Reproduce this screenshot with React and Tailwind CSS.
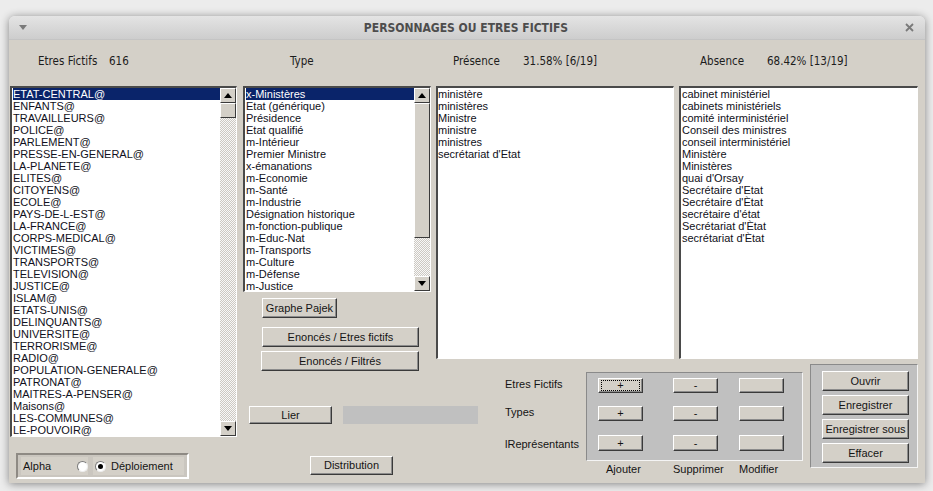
import React from "react";

// --- data ---
const etres = [
  "ETAT-CENTRAL@", "ENFANTS@", "TRAVAILLEURS@", "POLICE@", "PARLEMENT@",
  "PRESSE-EN-GENERAL@", "LA-PLANETE@", "ELITES@", "CITOYENS@", "ECOLE@",
  "PAYS-DE-L-EST@", "LA-FRANCE@", "CORPS-MEDICAL@", "VICTIMES@", "TRANSPORTS@",
  "TELEVISION@", "JUSTICE@", "ISLAM@", "ETATS-UNIS@", "DELINQUANTS@",
  "UNIVERSITE@", "TERRORISME@", "RADIO@", "POPULATION-GENERALE@", "PATRONAT@",
  "MAITRES-A-PENSER@", "Maisons@", "LES-COMMUNES@", "LE-POUVOIR@",
];

const types = [
  "x-Ministères", "Etat (générique)", "Présidence", "Etat qualifié", "m-Intérieur",
  "Premier Ministre", "x-émanations", "m-Economie", "m-Santé", "m-Industrie",
  "Désignation historique", "m-fonction-publique", "m-Educ-Nat", "m-Transports",
  "m-Culture", "m-Défense", "m-Justice",
];

const presence = ["ministère", "ministères", "Ministre", "ministre", "ministres", "secrétariat d'Etat"];

const absence = [
  "cabinet ministériel", "cabinets ministériels", "comité interministériel",
  "Conseil des ministres", "conseil interministériel", "Ministère", "Ministères",
  "quai d'Orsay", "Secrétaire d'Etat", "Secrétaire d'Ètat", "secrétaire d'état",
  "Secrétariat d'Ètat", "secrétariat d'Ètat",
];

// --- raised Tk style button ---
const Btn = ({ children, className = "" }) => (
  <div
    className={`flex items-center justify-center bg-[#d4d0c8] border-t border-l border-t-white border-l-white border-b border-r border-b-[#3a3a3a] border-r-[#3a3a3a] shadow-[inset_-1px_-1px_0_#8c8c8c] text-[11px] leading-none text-[#141414] ${className}`}
  >
    {children}
  </div>
);

const Arrow = ({ up }) => (
  <div className="h-[15px] w-[16px] shrink-0 flex items-center justify-center bg-[#d4d0c8] border-t border-l border-t-white border-l-white border-b border-r border-b-[#3a3a3a] border-r-[#3a3a3a]">
    <svg width="8" height="5" viewBox="0 0 8 5">
      {up ? <path d="M4 0 L8 5 L0 5 Z" fill="#000" /> : <path d="M0 0 L8 0 L4 5 Z" fill="#000" />}
    </svg>
  </div>
);

const ScrollBar = ({ thumb }) => (
  <div className="w-[16px] h-full flex flex-col shrink-0">
    <Arrow up />
    <div className={`w-[16px] shrink-0 bg-[#d4d0c8] border-t border-l border-t-white border-l-white border-b border-r border-b-[#3a3a3a] border-r-[#3a3a3a] ${thumb}`} />
    <div className="flex-1 bg-[repeating-conic-gradient(#cdc9c2_0%_25%,#f8f8f8_0%_50%)] bg-[length:2px_2px]" />
    <Arrow />
  </div>
);

// --- sunken list box ---
const ListBox = ({ items, selected = -1, className = "", thumb, pad = "" }) => (
  <div
    className={`flex bg-white border-t-2 border-l-2 border-t-[#4a4a4a] border-l-[#4a4a4a] border-b border-r border-b-white border-r-white overflow-hidden ${className}`}
  >
    <div className={`flex-1 overflow-hidden ${pad}`}>
      {items.map((it, i) => (
        <div
          key={i}
          className={`h-[12px] text-[11px] leading-[12px] whitespace-nowrap ${
            i === selected ? "bg-[#0a246a] text-white" : "text-[#101020]"
          }`}
        >
          {it}
        </div>
      ))}
    </div>
    {thumb && <ScrollBar thumb={thumb} />}
  </div>
);

const Radio = ({ on }) => (
  <div className="w-[11px] h-[11px] rounded-full bg-white border border-t-[#7a7a7a] border-l-[#7a7a7a] border-b-[#eeeeee] border-r-[#eeeeee] flex items-center justify-center">
    {on && <div className="w-[5px] h-[5px] rounded-full bg-black" />}
  </div>
);

export default function App() {
  return (
    <div className="w-[933px] h-[491px] overflow-hidden bg-[#ececec] pt-[16px] pl-[9px] font-['Liberation_Sans',Arial,sans-serif]">
      <div className="w-[916px] h-[467px] flex flex-col rounded-t-[6px] overflow-hidden shadow-[0_1px_8px_rgba(0,0,0,0.45)]">
        {/* Title bar */}
        <div className="h-[24px] shrink-0 flex items-center bg-gradient-to-b from-[#e4e4e4] to-[#cdcdcd] border-b border-[#c4c4c4]">
          <svg className="ml-[10px]" width="8" height="5" viewBox="0 0 8 5">
            <path d="M0 0 L8 0 L4 5 Z" fill="#7a7a7a" />
          </svg>
          <div className="flex-1 text-center text-[12px] font-bold text-[#4d4d4d] font-['DejaVu_Sans_Condensed','Liberation_Sans',sans-serif]">
            PERSONNAGES OU ETRES FICTIFS
          </div>
          <svg className="mr-[11px]" width="9" height="9" viewBox="0 0 9 9">
            <path d="M1 1 L8 8 M8 1 L1 8" stroke="#7a7a7a" strokeWidth="1.8" />
          </svg>
        </div>

        {/* Body */}
        <div className="flex-1 bg-[#d4d0c8] flex flex-col">
          {/* Header labels */}
          <div className="h-[46px] shrink-0 flex pt-[14px] text-[11.5px] leading-[15px] text-[#1c1c1c] font-['DejaVu_Sans_Condensed','Liberation_Sans',sans-serif]">
            <span className="ml-[29px] w-[71px]">Etres Fictifs</span>
            <span className="w-[181px]">616</span>
            <span className="w-[163px]">Type</span>
            <span className="w-[70px]">Présence</span>
            <span className="w-[177px]">31.58% [6/19]</span>
            <span className="w-[67px]">Absence</span>
            <span>68.42% [13/19]</span>
          </div>

          <div className="flex items-start">
            {/* Column 1 */}
            <div className="ml-[1px] w-[227px] flex flex-col">
              <ListBox items={etres} selected={0} className="h-[351px]" thumb="h-[15px]" pad="pl-[1px]" />
              <div className="mt-[16px] ml-[6px] w-[173px] h-[26px] bg-[#cac6bf] border-2 border-t-[#8e8a84] border-l-[#8e8a84] border-b-white border-r-white flex items-center px-[3px] gap-[5px]">
                <div className="w-[67px] h-[18px] bg-[#d4d0c8] flex items-center pl-[2px] text-[11px] text-[#141414]">
                  <span className="flex-1">Alpha</span>
                  <Radio />
                </div>
                <div className="h-[18px] flex-1 bg-[#d4d0c8] flex items-center gap-[5px] pl-[2px] text-[11px] text-[#141414]">
                  <Radio on />
                  <span>Déploiement</span>
                </div>
              </div>
            </div>

            {/* Column 2 */}
            <div className="ml-[6px] w-[193px] flex flex-col">
              <ListBox items={types} selected={0} className="w-[188px] h-[206px]" thumb="h-[135px]" pad="pl-[1px]" />
              <Btn className="mt-[6px] ml-[19px] w-[75px] h-[20px]">Graphe Pajek</Btn>
              <Btn className="mt-[9px] ml-[19px] w-[157px] h-[20px]">Enoncés / Etres fictifs</Btn>
              <Btn className="mt-[4px] ml-[18px] w-[158px] h-[20px]">Enoncés / Filtrés</Btn>
              <div className="mt-[35px] flex w-max">
                <Btn className="ml-[6px] w-[83px] h-[18px]">Lier</Btn>
                <div className="ml-[11px] w-[135px] h-[18px] bg-[#c0c0c0]" />
              </div>
              <Btn className="mt-[32px] ml-[67px] w-[83px] h-[19px]">Distribution</Btn>
            </div>

            {/* Columns 3 & 4 */}
            <div className="w-[482px] flex flex-col">
              <div className="flex gap-[5px]">
                <ListBox items={presence} className="w-[238px] h-[273px]" />
                <ListBox items={absence} className="w-[239px] h-[273px]" pad="pl-[1px]" />
              </div>

              <div className="flex items-start">
                {/* row labels */}
                <div className="ml-[69px] w-[81px] mt-[13px] flex flex-col text-[11px] leading-[14px] text-[#141414]">
                  <span className="mt-[5px]">Etres Fictifs</span>
                  <span className="mt-[14px]">Types</span>
                  <span className="mt-[18px]">lReprésentants</span>
                </div>

                {/* action grid */}
                <div className="w-[217px] mt-[13px] flex flex-col">
                  <div className="h-[89px] bg-[#c0c0c0] border border-t-[#8a8a8a] border-l-[#8a8a8a] border-b-[#f4f4f4] border-r-[#f4f4f4] flex flex-col pl-[11px]">
                    <div className="mt-[5px] flex">
                      <Btn className="w-[45px] h-[15px]">
                        <span className="w-[39px] h-[11px] border border-dotted border-black flex items-center justify-center">+</span>
                      </Btn>
                      <Btn className="ml-[30px] w-[45px] h-[15px]">-</Btn>
                      <Btn className="ml-[21px] w-[45px] h-[15px]" />
                    </div>
                    <div className="mt-[13px] flex">
                      <Btn className="w-[45px] h-[15px]">+</Btn>
                      <Btn className="ml-[30px] w-[45px] h-[15px]">-</Btn>
                      <Btn className="ml-[21px] w-[45px] h-[15px]" />
                    </div>
                    <div className="mt-[14px] flex">
                      <Btn className="w-[45px] h-[16px]">+</Btn>
                      <Btn className="ml-[30px] w-[45px] h-[16px]">-</Btn>
                      <Btn className="ml-[21px] w-[45px] h-[16px]" />
                    </div>
                  </div>
                  <div className="mt-[1px] flex text-[11px] leading-[14px] text-[#141414]">
                    <span className="ml-[20px] w-[67px]">Ajouter</span>
                    <span className="w-[66px]">Supprimer</span>
                    <span>Modifier</span>
                  </div>
                </div>

                {/* file panel */}
                <div className="ml-[7px] mt-[5px] w-[108px] h-[104px] bg-[#c0c0c0] border border-t-[#8a8a8a] border-l-[#8a8a8a] border-b-[#f4f4f4] border-r-[#f4f4f4] flex flex-col items-start pl-[11px] pt-[6px] gap-[4px]">
                  <Btn className="w-[87px] h-[20px]">Ouvrir</Btn>
                  <Btn className="w-[87px] h-[20px]">Enregistrer</Btn>
                  <Btn className="w-[87px] h-[20px]">Enregistrer sous</Btn>
                  <Btn className="w-[87px] h-[20px]">Effacer</Btn>
                </div>
              </div>
            </div>
          </div>
        </div>
      </div>
    </div>
  );
}
